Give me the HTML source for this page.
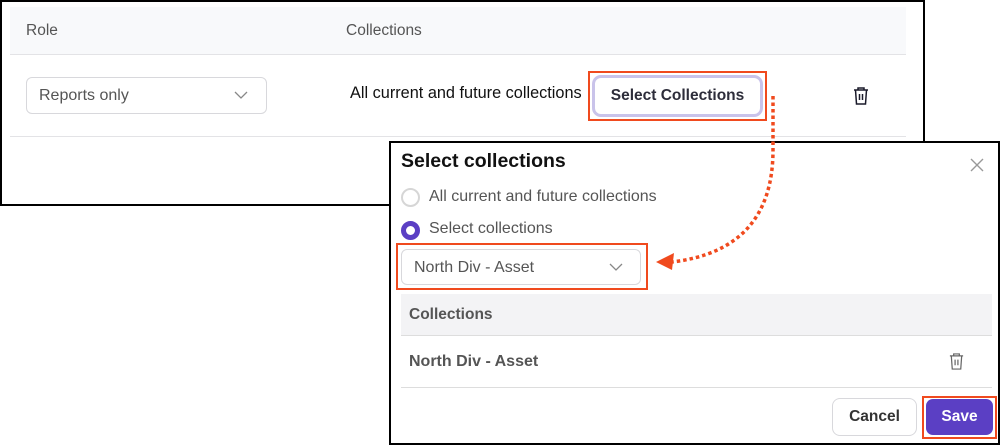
<!DOCTYPE html>
<html><head><style>
*{box-sizing:border-box;margin:0;padding:0}
body{width:1000px;height:445px;background:#fff;position:relative;overflow:hidden;font-family:"Liberation Sans",sans-serif;color:#222}
.a{position:absolute}
</style></head><body>
<div class="a" style="left:0;top:0;width:925px;height:206px;border:2px solid #000;background:#fff"></div>
<div class="a" style="left:10px;top:7px;width:896px;height:48px;background:#f8f9fb;border-bottom:1px solid #e3e3e6"></div>
<div class="a" style="left:26px;top:22px;font-size:15.5px;color:#555">Role</div>
<div class="a" style="left:346px;top:22px;font-size:15.5px;color:#555">Collections</div>
<div class="a" style="left:26px;top:77px;width:241px;height:37px;border:1px solid #d8d8dc;border-radius:6px"></div>
<div class="a" style="left:39px;top:87px;font-size:16px;color:#555">Reports only</div>
<svg class="a" style="left:234px;top:90px" width="14" height="10"><path d="M1 2l6 6 6-6" fill="none" stroke="#888" stroke-width="1.3"/></svg>
<div class="a" style="left:350px;top:84px;font-size:16.3px;color:#111">All current and future collections</div>
<div class="a" style="left:588px;top:71px;width:179px;height:50px;border:2px solid #f04a1e"></div>
<div class="a" style="left:592px;top:75px;width:171px;height:42px;border:3px solid #c9c3ea;border-radius:9px;background:#fff"></div>
<div class="a" style="left:592px;top:87px;width:171px;text-align:center;font-size:15.5px;font-weight:bold;color:#2d2d3a">Select Collections</div>
<svg class="a" style="left:852px;top:86px" width="18" height="20" viewBox="0 0 18 20"><path d="M2 4h14M6 4V2h6v2M3.5 4l1 14h9l1-14M7.5 8v6M10.5 8v6" fill="none" stroke="#1a1a2a" stroke-width="1.5"/></svg>
<div class="a" style="left:10px;top:136px;width:896px;height:1px;background:#e3e3e6"></div>

<div class="a" style="left:389px;top:141px;width:611px;height:304px;border:2px solid #000;background:#fff"></div>
<div class="a" style="left:401px;top:150px;font-size:19.5px;font-weight:bold;color:#111">Select collections</div>
<svg class="a" style="left:970px;top:158px" width="14" height="14"><path d="M1 1l12 12M13 1L1 13" stroke="#999" stroke-width="1.4"/></svg>
<div class="a" style="left:401px;top:188px;width:19px;height:19px;border:2px solid #d6d6d6;border-radius:50%"></div>
<div class="a" style="left:429px;top:188px;font-size:16px;color:#555">All current and future collections</div>
<div class="a" style="left:401px;top:221px;width:19px;height:19px;border:5px solid #5b3fc4;border-radius:50%"></div>
<div class="a" style="left:429px;top:220px;font-size:16px;color:#555">Select collections</div>
<div class="a" style="left:396px;top:243px;width:252px;height:47px;border:2px solid #f04a1e"></div>
<div class="a" style="left:401px;top:249px;width:240px;height:36px;border:1px solid #d8d8dc;border-radius:6px"></div>
<div class="a" style="left:414px;top:259px;font-size:16px;color:#555">North Div - Asset</div>
<svg class="a" style="left:609px;top:262px" width="14" height="10"><path d="M1 2l6 6 6-6" fill="none" stroke="#888" stroke-width="1.3"/></svg>
<div class="a" style="left:401px;top:294px;width:591px;height:42px;background:#f3f3f5;border-bottom:1px solid #ddd"></div>
<div class="a" style="left:409px;top:306px;font-size:15.5px;font-weight:bold;color:#555">Collections</div>
<div class="a" style="left:409px;top:353px;font-size:16px;font-weight:bold;color:#555">North Div - Asset</div>
<svg class="a" style="left:948px;top:352px" width="17" height="19" viewBox="0 0 18 20"><path d="M2 4h14M6 4V2h6v2M3.5 4l1 14h9l1-14M7.5 8v6M10.5 8v6" fill="none" stroke="#666" stroke-width="1.3"/></svg>
<div class="a" style="left:401px;top:387px;width:591px;height:1px;background:#ddd"></div>
<div class="a" style="left:832px;top:398px;width:85px;height:38px;border:1px solid #d8d8dc;border-radius:8px;text-align:center;line-height:36px;font-size:15.5px;font-weight:bold;color:#333">Cancel</div>
<div class="a" style="left:922px;top:396px;width:75px;height:43px;border:2px solid #f04a1e"></div>
<div class="a" style="left:926px;top:399px;width:67px;height:36px;background:#5b3fc4;border-radius:7px;text-align:center;line-height:36px;font-size:15.5px;font-weight:bold;color:#fff">Save</div>

<svg class="a" style="left:0;top:0" width="1000" height="445">
<path d="M773 96 V150 Q773 250 672 262" fill="none" stroke="#f04a1e" stroke-width="3.5" stroke-dasharray="3.5 3"/>
<path d="M656 262 L674 253 L672 270 Z" fill="#f04a1e"/>
</svg>
</body></html>
